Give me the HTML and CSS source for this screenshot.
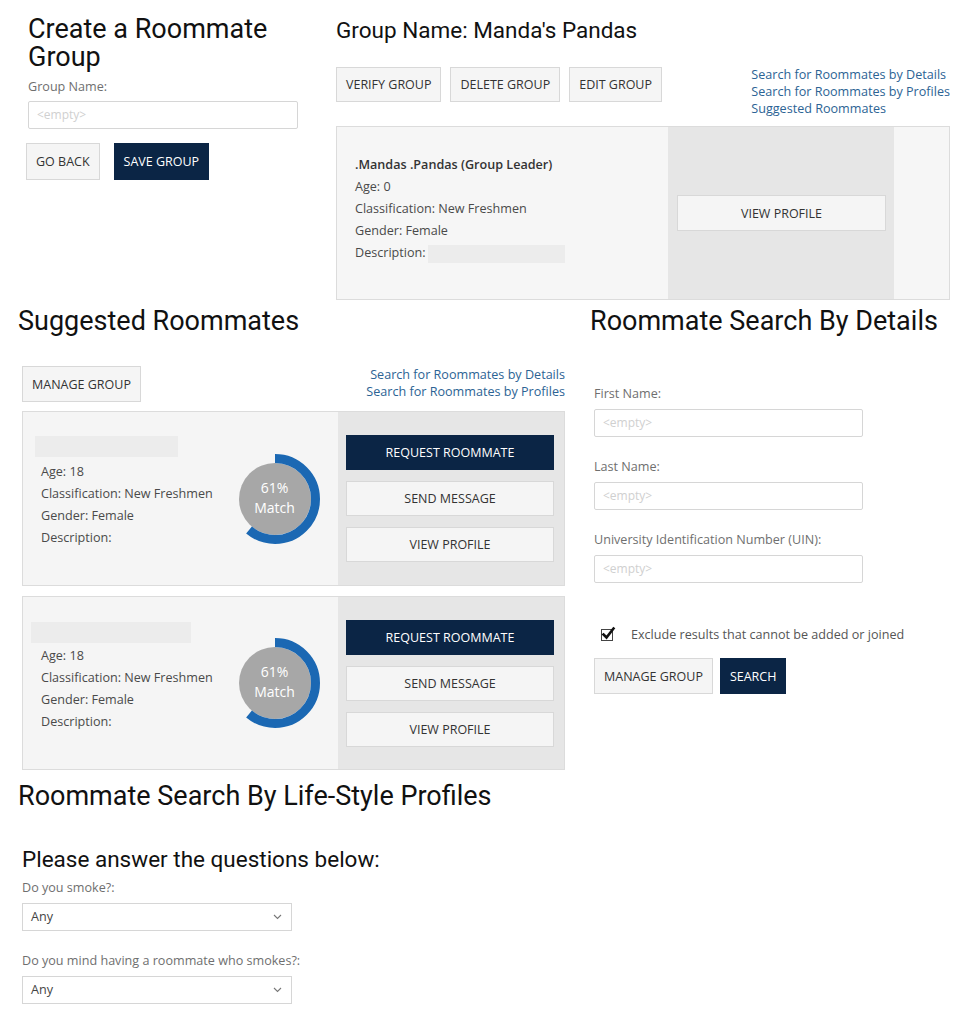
FILE: index.html
```html
<!DOCTYPE html>
<html lang="en">
<head>
<meta charset="utf-8">
<title>Roommate Groups</title>
<link rel="stylesheet" href="styles.css">
</head>
<body>
<div class="sheet">
  <div class="row-top">
    <section class="create">
      <h1 class="h-big">Create a Roommate Group</h1>
      <div class="lbl create-lbl">Group Name:</div>
      <div class="input create-input">&lt;empty&gt;</div>
      <div class="btn-row create-btns">
        <button class="btn tall">GO BACK</button>
        <button class="btn dark tall">SAVE GROUP</button>
      </div>
    </section>
    <section class="group">
      <h2 class="h-mid">Group Name: Manda's Pandas</h2>
      <div class="toolbar group-toolbar">
        <div class="btn-row gap9">
          <button class="btn">VERIFY GROUP</button>
          <button class="btn">DELETE GROUP</button>
          <button class="btn">EDIT GROUP</button>
        </div>
        <nav class="links">
          <a href="#">Search for Roommates by Details</a>
          <a href="#">Search for Roommates by Profiles</a>
          <a href="#">Suggested Roommates</a>
        </nav>
      </div>
      <div class="member-card">
        <div class="mc-info">
          <div class="line strong">.Mandas .Pandas (Group Leader)</div>
          <div class="line">Age: 0</div>
          <div class="line">Classification: New Freshmen</div>
          <div class="line">Gender: Female</div>
          <div class="line">Description:<span class="redact-inline"></span></div>
        </div>
        <div class="mc-action"><button class="btn block">VIEW PROFILE</button></div>
        <div class="mc-tail"></div>
      </div>
    </section>
  </div>

  <div class="row-mid">
    <section class="suggested">
      <h1 class="h-big shift">Suggested Roommates</h1>
      <div class="toolbar sugg-toolbar">
        <button class="btn">MANAGE GROUP</button>
        <nav class="links right">
          <a href="#">Search for Roommates by Details</a>
          <a href="#">Search for Roommates by Profiles</a>
        </nav>
      </div>

      <div class="match-card">
        <div class="match-info">
          <div class="match-text">
            <div class="redact r1"></div>
            <div class="line">Age: 18</div>
            <div class="line">Classification: New Freshmen</div>
            <div class="line">Gender: Female</div>
            <div class="line">Description:</div>
          </div>
          <div class="donut">
            <svg width="90" height="90" viewBox="0 0 90 90">
              <circle cx="45" cy="45" r="36" fill="#a7a7a7"/>
              <circle cx="45" cy="45" r="40.5" fill="none" stroke="#1b68b3" stroke-width="9" stroke-dasharray="155.2 300" transform="rotate(-90 45 45)"/>
            </svg>
            <div class="donut-label">61%<br>Match</div>
          </div>
        </div>
        <div class="match-action">
          <button class="btn dark block">REQUEST ROOMMATE</button>
          <button class="btn block">SEND MESSAGE</button>
          <button class="btn block">VIEW PROFILE</button>
        </div>
      </div>

      <div class="match-card second">
        <div class="match-info">
          <div class="match-text">
            <div class="redact r2"></div>
            <div class="line">Age: 18</div>
            <div class="line">Classification: New Freshmen</div>
            <div class="line">Gender: Female</div>
            <div class="line">Description:</div>
          </div>
          <div class="donut">
            <svg width="90" height="90" viewBox="0 0 90 90">
              <circle cx="45" cy="45" r="36" fill="#a7a7a7"/>
              <circle cx="45" cy="45" r="40.5" fill="none" stroke="#1b68b3" stroke-width="9" stroke-dasharray="155.2 300" transform="rotate(-90 45 45)"/>
            </svg>
            <div class="donut-label">61%<br>Match</div>
          </div>
        </div>
        <div class="match-action">
          <button class="btn dark block">REQUEST ROOMMATE</button>
          <button class="btn block">SEND MESSAGE</button>
          <button class="btn block">VIEW PROFILE</button>
        </div>
      </div>
    </section>

    <section class="details">
      <h1 class="h-big">Roommate Search By Details</h1>
      <div class="details-form">
        <div class="field">
          <div class="lbl">First Name:</div>
          <div class="input wide">&lt;empty&gt;</div>
        </div>
        <div class="field">
          <div class="lbl">Last Name:</div>
          <div class="input wide">&lt;empty&gt;</div>
        </div>
        <div class="field">
          <div class="lbl">University Identification Number (UIN):</div>
          <div class="input wide">&lt;empty&gt;</div>
        </div>
        <div class="check-row">
          <svg class="check" width="16" height="16" viewBox="0 0 16 16">
            <rect x="1.5" y="3.5" width="11" height="11" fill="#fff" stroke="#444" stroke-width="1"/>
            <path d="M3.5 8.5 L6.5 11.5 L13.5 2.5" fill="none" stroke="#111" stroke-width="2.6" stroke-linecap="square"/>
          </svg>
          <span>Exclude results that cannot be added or joined</span>
        </div>
        <div class="btn-row gap7">
          <button class="btn">MANAGE GROUP</button>
          <button class="btn dark">SEARCH</button>
        </div>
      </div>
    </section>
  </div>

  <section class="lifestyle">
    <h1 class="h-big">Roommate Search By Life-Style Profiles</h1>
    <h2 class="h-mid q-title">Please answer the questions below:</h2>
    <div class="q-field">
      <div class="lbl">Do you smoke?:</div>
      <div class="select">Any
        <svg width="9" height="6" viewBox="0 0 9 6"><path d="M1 1 L4.5 4.5 L8 1" fill="none" stroke="#777" stroke-width="1.1"/></svg>
      </div>
    </div>
    <div class="q-field">
      <div class="lbl">Do you mind having a roommate who smokes?:</div>
      <div class="select">Any
        <svg width="9" height="6" viewBox="0 0 9 6"><path d="M1 1 L4.5 4.5 L8 1" fill="none" stroke="#777" stroke-width="1.1"/></svg>
      </div>
    </div>
  </section>
</div>
</body>
</html>
```

FILE: styles.css
```css
* { box-sizing: border-box; }
body {
  margin: 0;
  background: #fff;
  font-family: "Open Sans", sans-serif;
  font-size: 12.6px;
  color: #444;
}
.sheet { width: 976px; }

.h-big {
  font-family: Roboto, sans-serif;
  font-weight: 400;
  font-size: 27px;
  line-height: 29px;
  margin: 0;
  color: #111;
}
.h-mid {
  font-family: Roboto, sans-serif;
  font-weight: 400;
  font-size: 22.5px;
  line-height: 26px;
  margin: 0;
  color: #111;
}

.lbl { color: #6f6f6f; line-height: 18px; }
.input {
  height: 28px;
  border: 1px solid #d6d6d6;
  border-radius: 2px;
  background: #fff;
  color: #d0d0d0;
  font-size: 12px;
  line-height: 26px;
  padding-left: 8px;
}

.btn {
  font-family: "Open Sans", sans-serif;
  font-size: 12.5px;
  color: #333;
  background: #f5f5f5;
  border: 1px solid #d8d8d8;
  height: 36px;
  padding: 0 9px;
  cursor: pointer;
}
.btn.dark { background: #0b2545; border-color: #0b2545; color: #fff; }
.btn.tall { height: 37px; }
.btn.block { width: 100%; }
.btn-row { display: flex; }
.gap9 { gap: 9px; }
.gap7 { gap: 7px; }

.links { display: flex; flex-direction: column; }
.links a { color: #2c6394; text-decoration: none; line-height: 17px; }
.links.right { align-items: flex-end; }

.toolbar { display: flex; justify-content: space-between; align-items: flex-start; }

/* ---- top row ---- */
.row-top { display: flex; height: 300px; }
.create { width: 336px; padding: 15px 0 0 26px; }
.create .h-big { margin-left: 2px; line-height: 28px; }
.create-lbl { margin: 7px 0 0 2px; }
.create-input { margin: 5px 0 0 2px; width: 270px; }
.create-btns { margin-top: 14px; gap: 14px; }

.group { flex: 1; padding: 17px 26px 0 0; }
.group-toolbar { margin-top: 23px; }
.group-toolbar .btn-row { margin-top: 1px; height: 35px; }
.group-toolbar .btn { height: 35px; }

.member-card {
  margin-top: 9px;
  height: 174px;
  display: flex;
  border: 1px solid #dcdcdc;
  background: #f6f6f6;
}
.mc-info { width: 331px; padding: 27px 0 0 18px; }
.line { line-height: 22px; color: #4a4a4a; }
.line.strong { font-weight: 600; color: #333; }
.redact-inline {
  display: inline-block;
  width: 137px;
  height: 18px;
  margin-left: 2px;
  vertical-align: middle;
  background: #ececec;
}
.mc-action {
  width: 226px;
  background: #e6e6e6;
  display: flex;
  align-items: center;
  padding: 0 8px 0 9px;
}
.mc-tail { flex: 1; }

/* ---- middle row ---- */
.row-mid { display: flex; height: 481px; }
.suggested { width: 580px; padding: 7px 15px 0 22px; }
.shift { margin-left: -4px; }
.sugg-toolbar { margin-top: 30px; }

.match-card {
  margin-top: 9px;
  height: 175px;
  display: flex;
  border: 1px solid #dcdcdc;
  background: #f5f5f5;
}
.match-card.second { margin-top: 10px; height: 174px; }
.match-info {
  width: 315px;
  display: flex;
  padding-right: 18px;
}
.match-text { padding: 24px 0 0 18px; }
.redact { background: #ececec; height: 21px; }
.r1 { width: 143px; margin: 0 0 4px -6px; }
.r2 { width: 160px; margin: 1px 0 2px -10px; }
.donut {
  margin-left: auto;
  align-self: center;
  display: grid;
  width: 90px;
  height: 90px;
}
.donut svg, .donut-label { grid-area: 1 / 1; }
.donut-label {
  place-self: center;
  text-align: center;
  color: #fff;
  font-size: 14px;
  line-height: 20px;
  margin: -2px 0 0 -1px;
}
.match-action {
  flex: 1;
  background: #e6e6e6;
  display: flex;
  flex-direction: column;
  justify-content: center;
  gap: 11px;
  padding: 0 10px 0 8px;
}
.match-action .btn { height: 35px; }

.details { flex: 1; padding: 7px 0 0 10px; }
.details-form { padding: 48px 0 0 4px; }
.field { margin-bottom: 20px; }
.field .lbl { padding-top: 1px; margin-bottom: 6px; }
.input.wide { width: 269px; }
.check-row {
  display: flex;
  align-items: center;
  height: 18px;
  margin-top: 42px;
  color: #555;
}
.check { margin: 0 15px 0 6px; }
.details .btn-row { margin-top: 15px; }

/* ---- bottom ---- */
.lifestyle { padding: 1px 0 0 18px; }
.q-title { margin: 35px 0 0 4px; }
.q-field { margin-left: 4px; margin-top: 6px; }
.q-field + .q-field { margin-top: 20px; }
.q-field .lbl { padding-top: 1px; margin-bottom: 6px; }
.select {
  width: 270px;
  height: 28px;
  border: 1px solid #d6d6d6;
  background: #fff;
  color: #444;
  line-height: 26px;
  padding: 0 9px 0 8px;
  display: flex;
  justify-content: space-between;
  align-items: center;
}
```
